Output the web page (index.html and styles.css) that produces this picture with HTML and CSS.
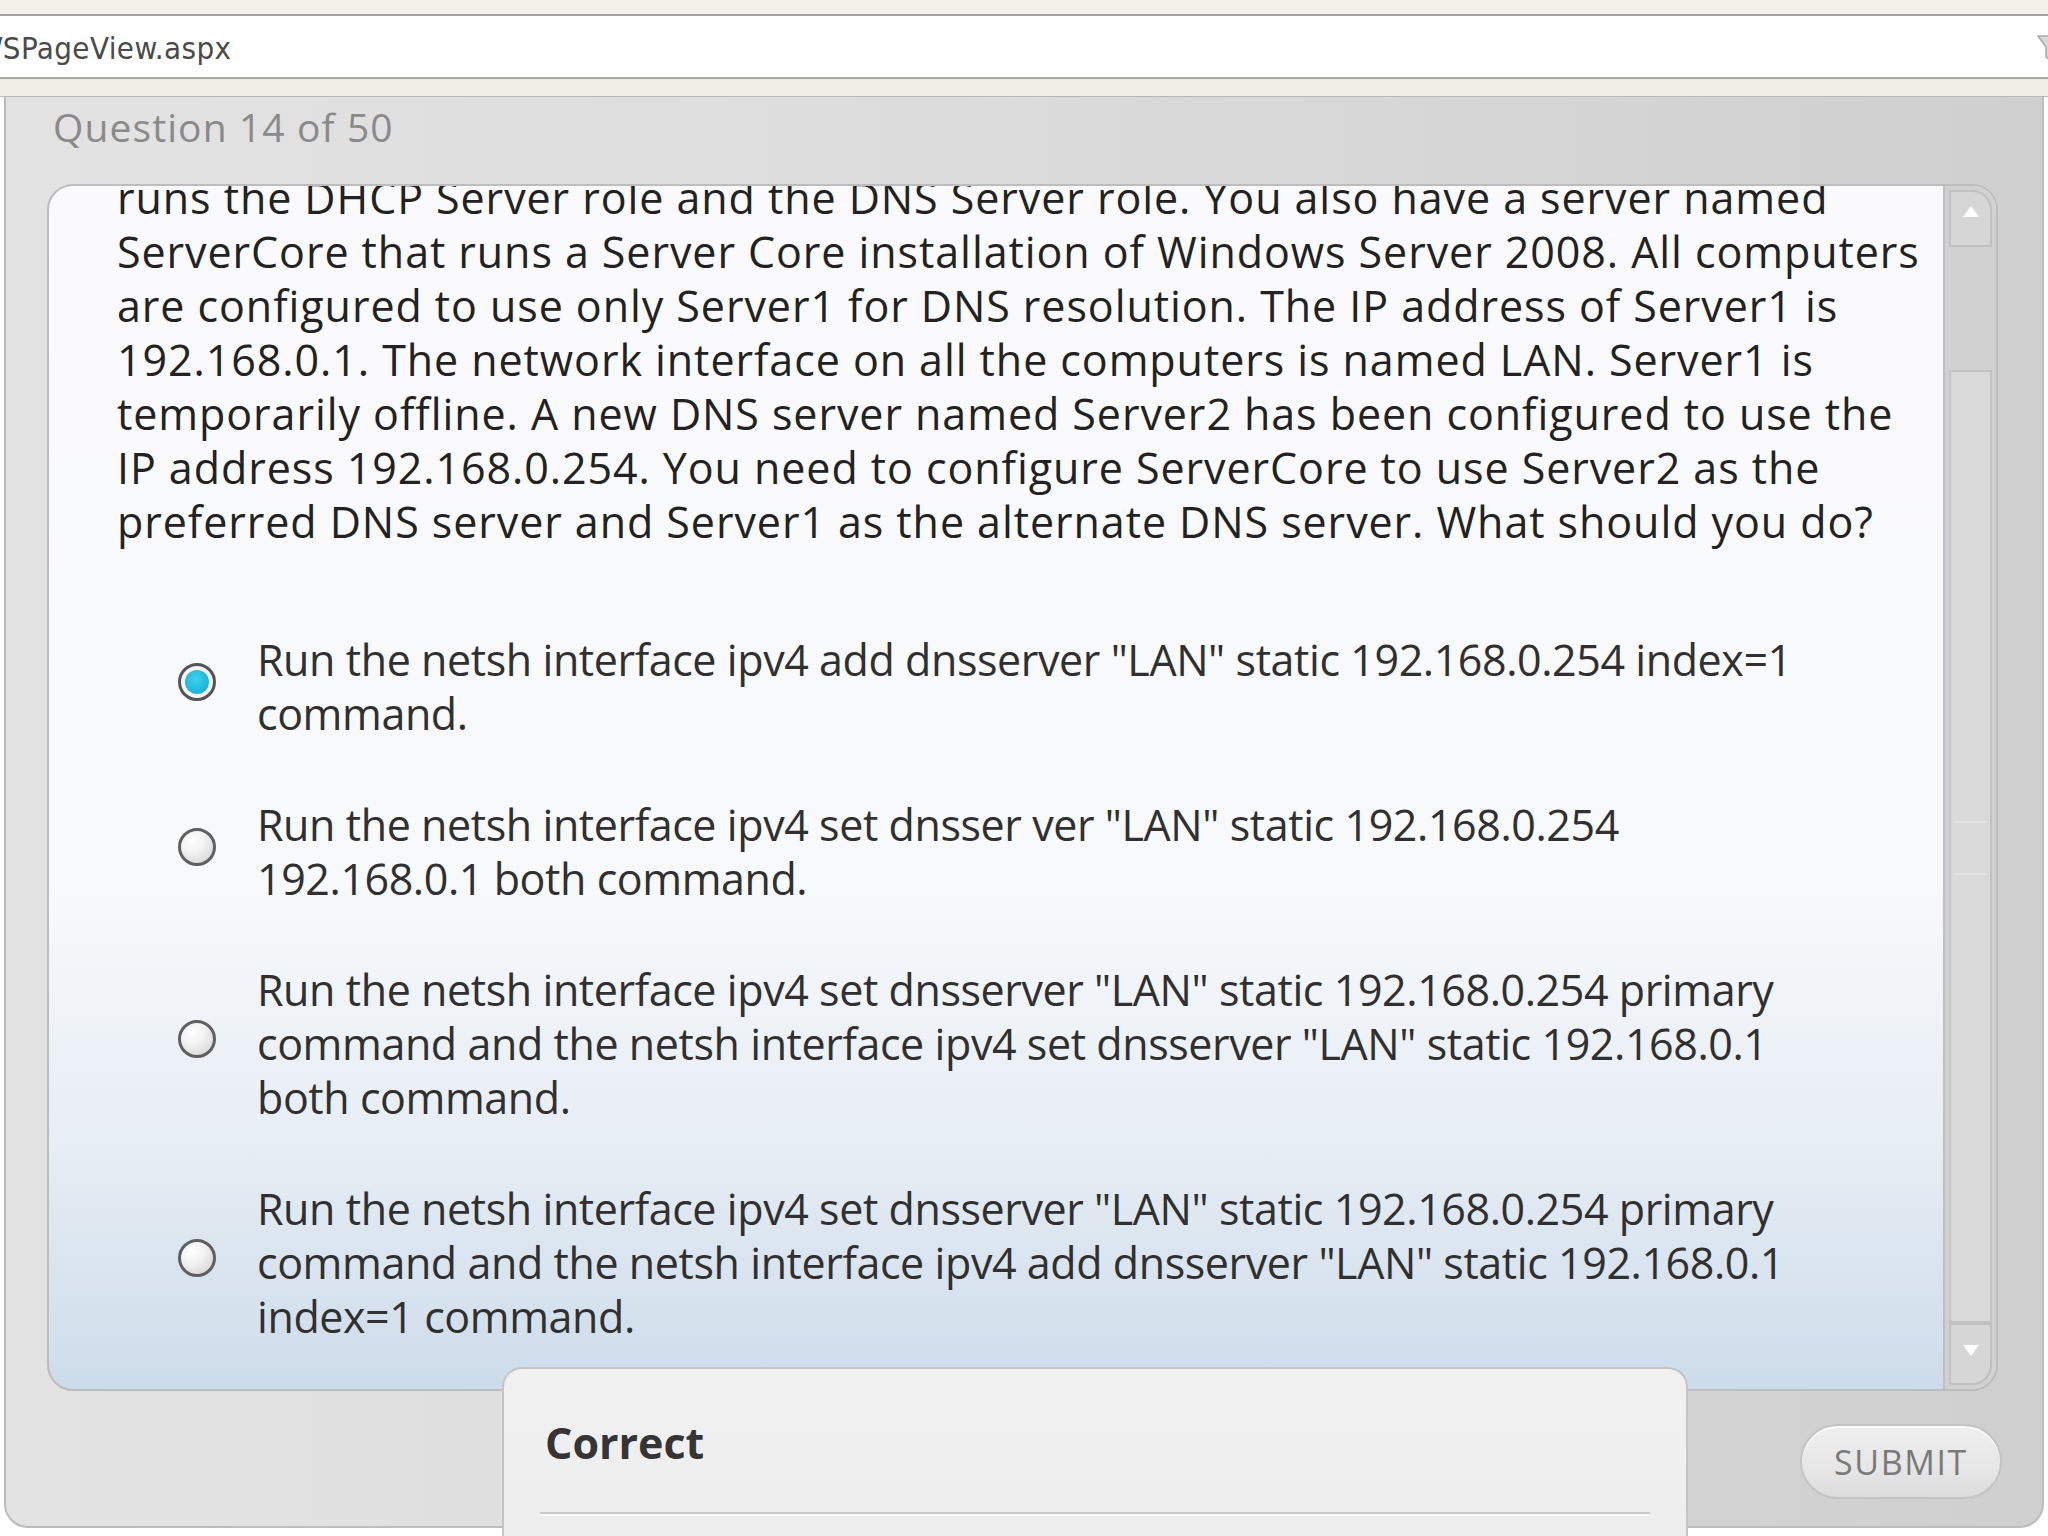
FILE: index.html
```html
<!DOCTYPE html>
<html lang="en">
<head>
<meta charset="utf-8">
<title>Question 14 of 50</title>
<link rel="stylesheet" href="styles.css">
</head>
<body>
<div class="chrome">
  <div class="chrome-top"></div>
  <div class="address">
    <span class="url">/SPageView.aspx</span>
    <svg class="addr-icon" viewBox="0 0 24 32" width="24" height="32" aria-hidden="true">
      <path d="M2 4 L22 4 L14 15 L14 28 L10 25 L10 15 Z" fill="#d8d8d8" stroke="#a9a9a9" stroke-width="1.5" stroke-linejoin="round"/>
    </svg>
  </div>
  <div class="chrome-strip"></div>
</div>

<div class="panel">
  <div class="qnum">Question 14 of 50</div>

  <div class="qbox">
    <div class="qcontent">
      <p class="stem">runs the DHCP Server role and the DNS Server role. You also have a server named<br>ServerCore that runs a Server Core installation of Windows Server 2008. All computers<br>are configured to use only Server1 for DNS resolution. The IP address of Server1 is<br>192.168.0.1. The network interface on all the computers is named LAN. Server1 is<br>temporarily offline. A new DNS server named Server2 has been configured to use the<br>IP address 192.168.0.254. You need to configure ServerCore to use Server2 as the<br>preferred DNS server and Server1 as the alternate DNS server. What should you do?</p>

      <ul class="options">
        <li class="option">
          <span class="radio selected"><span class="dot"></span></span>
          <span class="opt-text">Run the netsh interface ipv4 add dnsserver "LAN" static 192.168.0.254 index=1<br>command.</span>
        </li>
        <li class="option">
          <span class="radio"></span>
          <span class="opt-text">Run the netsh interface ipv4 set dnsser ver "LAN" static 192.168.0.254<br>192.168.0.1 both command.</span>
        </li>
        <li class="option">
          <span class="radio"></span>
          <span class="opt-text">Run the netsh interface ipv4 set dnsserver "LAN" static 192.168.0.254 primary<br>command and the netsh interface ipv4 set dnsserver "LAN" static 192.168.0.1<br>both command.</span>
        </li>
        <li class="option">
          <span class="radio"></span>
          <span class="opt-text">Run the netsh interface ipv4 set dnsserver "LAN" static 192.168.0.254 primary<br>command and the netsh interface ipv4 add dnsserver "LAN" static 192.168.0.1<br>index=1 command.</span>
        </li>
      </ul>
    </div>

    <div class="scrollbar">
      <div class="sb-btn sb-up"><span class="arrow-up"></span></div>
      <div class="sb-track">
        <div class="sb-thumb">
          <div class="grip"></div>
        </div>
      </div>
      <div class="sb-btn sb-down"><span class="arrow-down"></span></div>
    </div>
  </div>

  <div class="footer">
    <button class="submit" type="button">SUBMIT</button>
  </div>

  <div class="feedback">
    <div class="fb-title">Correct</div>
    <div class="fb-rule"></div>
  </div>
</div>
</body>
</html>
```

FILE: styles.css
```css
html, body {
  margin: 0;
  padding: 0;
  width: 2048px;
  height: 1536px;
  overflow: hidden;
  background: #ffffff;
}

body {
  font-family: "Open Sans", "Noto Sans", sans-serif;
}

/* ---------- browser chrome ---------- */
.chrome-top {
  height: 14px;
  background: #f3f2ea;
  border-bottom: 2px solid #a3a3a3;
}

.address {
  height: 61px;
  background: #ffffff;
  border-bottom: 2px solid #a6a6a6;
  display: flex;
  align-items: center;
  justify-content: space-between;
  overflow: hidden;
}

.url {
  font-family: "DejaVu Sans Condensed", "DejaVu Sans", sans-serif;
  font-size: 31px;
  letter-spacing: 0.4px;
  color: #4a4a4a;
  margin-left: -7px;
  margin-top: 2px;
}

.addr-icon {
  margin-right: -12px;
  margin-top: 2px;
}

.chrome-strip {
  height: 17px;
  background: #efeee4;
  border-bottom: 1px solid #b8b8b8;
}

/* ---------- panel ---------- */
.panel {
  position: relative;
  margin: 0 4px;
  height: 1431px;
  box-sizing: border-box;
  border: 2px solid #bcbcbc;
  border-top: none;
  border-radius: 0 0 24px 24px;
  background: linear-gradient(to right, #e3e3e3 0%, #dcdcdc 45%, #cfcfcf 100%);
  display: flex;
  flex-direction: column;
}

.qnum {
  padding: 6px 0 0 47px;
  height: 48px;
  line-height: 48px;
  font-size: 39px;
  letter-spacing: 1.1px;
  color: #8a8a8a;
}

.qbox {
  margin: 33px 44px 0 41px;
  height: 1207px;
  box-sizing: border-box;
  border: 2px solid #bdbdbd;
  border-radius: 26px;
  overflow: hidden;
  display: flex;
  background: linear-gradient(to bottom, #fafafc 0%, #f8f9fb 58%, #e6edf4 80%, #cddcea 100%);
}

.qcontent {
  flex: 1;
  padding-left: 68px;
  overflow: hidden;
  color: #262626;
}

.stem {
  margin: -15px 0 0 0;
  font-size: 43px;
  line-height: 54px;
  letter-spacing: 0.93px;
  white-space: nowrap;
  color: #222222;
}

.options {
  list-style: none;
  margin: 84px 0 0 0;
  padding: 0 0 0 61px;
  display: flex;
  flex-direction: column;
  gap: 57px;
}

.option {
  display: flex;
  align-items: center;
  gap: 41px;
}

.opt-text {
  font-size: 43px;
  line-height: 54px;
  letter-spacing: -0.42px;
  white-space: nowrap;
  color: #303030;
}

.radio {
  flex: none;
  width: 38px;
  height: 38px;
  box-sizing: border-box;
  border-radius: 50%;
  border: 3px solid #606060;
  background: radial-gradient(circle at 35% 30%, #ffffff 0%, #f2f2f2 40%, #cdcdcd 100%);
  margin-top: -10px;
  display: flex;
  align-items: center;
  justify-content: center;
}

.radio.selected {
  border-color: #555555;
  background: #f4f4f4;
}

.dot {
  width: 24px;
  height: 24px;
  border-radius: 50%;
  background: radial-gradient(circle at 45% 40%, #3fd0ea 0%, #17b6d9 70%, #0e9ec2 100%);
}

/* ---------- scrollbar ---------- */
.scrollbar {
  flex: none;
  width: 53px;
  box-sizing: border-box;
  border-left: 2px solid #bfbfbf;
  background: #d1d1d1;
  display: flex;
  flex-direction: column;
  padding: 4px;
}

.sb-btn {
  height: 57px;
  box-sizing: border-box;
  border: 2px solid #c0c0c0;
  background: #d6d6d6;
  display: flex;
  align-items: center;
  justify-content: center;
}

.sb-up {
  border-top-right-radius: 20px;
}

.sb-down {
  border-bottom-right-radius: 20px;
  height: 62px;
}

.arrow-up {
  width: 0;
  height: 0;
  border-left: 8px solid transparent;
  border-right: 8px solid transparent;
  border-bottom: 11px solid #ffffff;
  margin-top: -14px;
}

.arrow-down {
  width: 0;
  height: 0;
  border-left: 8px solid transparent;
  border-right: 8px solid transparent;
  border-top: 11px solid #ffffff;
  margin-top: -8px;
}

.sb-track {
  flex: 1;
  display: flex;
  flex-direction: column;
  padding-top: 123px;
}

.sb-thumb {
  flex: 1;
  box-sizing: border-box;
  border: 2px solid #c2c2c2;
  background: #dadada;
  position: relative;
}

.grip {
  position: absolute;
  left: 4px;
  right: 4px;
  top: 449px;
  height: 50px;
  border-top: 2px solid #e4e4e4;
  border-bottom: 2px solid #e4e4e4;
}

/* ---------- footer ---------- */
.footer {
  display: flex;
  justify-content: flex-end;
  padding: 33px 40px 0 0;
}

.submit {
  width: 202px;
  height: 75px;
  border-radius: 38px;
  border: 2px solid #c4c4c4;
  background: linear-gradient(to bottom, #efefef 0%, #e6e6e6 60%, #dcdcdc 100%);
  font-family: "Open Sans", "Noto Sans", sans-serif;
  font-size: 34px;
  color: #7a7a7a;
  letter-spacing: 1.6px;
  padding: 0;
  box-shadow: inset 0 2px 0 #fafafa;
}

/* ---------- feedback overlay ---------- */
.feedback {
  position: absolute;
  left: 496px;
  top: 1270px;
  width: 1186px;
  height: 190px;
  box-sizing: border-box;
  border: 2px solid #c4c4c4;
  border-bottom: none;
  border-radius: 20px 20px 0 0;
  background: linear-gradient(to bottom, #f1f1f1 0%, #ededed 100%);
}

.fb-title {
  padding: 46px 0 0 41px;
  height: 56px;
  line-height: 56px;
  font-size: 43px;
  font-weight: 700;
  color: #353535;
}

.fb-rule {
  margin: 41px 36px 0 36px;
  height: 2px;
  background: #c9c9c9;
  box-shadow: 0 2px 0 #fafafa;
}
```
